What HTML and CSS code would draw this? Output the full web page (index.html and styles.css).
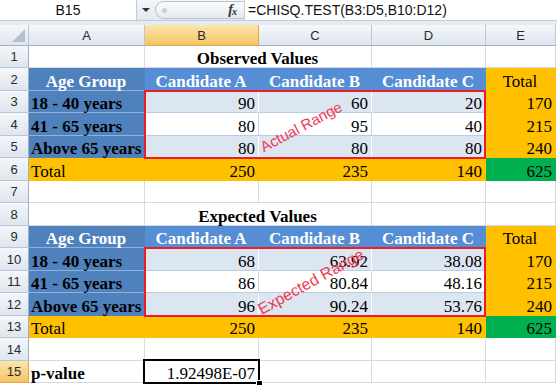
FILE: index.html
```html
<!DOCTYPE html>
<html>
<head>
	<meta charset="utf-8" />
	<title>CHISQ.TEST</title>
	<link rel="stylesheet" href="styles.css">
</head>
<body>
<div class="fbar">
	<div class="namebox">B15</div>
	<div class="drop"></div>
	<div class="fxzone">
		<span class="pill"><span class="dot"></span></span>
		<i class="fx">f<sub>x</sub></i>
	</div>
	<div class="formula">=CHISQ.TEST(B3:D5,B10:D12)</div>
</div>
<div class="gap"></div>
<div class="sheetwrap">
	<div class="sheet">
		<!-- column headers -->
		<div class="corner"><span class="tri"></span></div>
		<div class="hd">A</div>
		<div class="hd sel">B</div>
		<div class="hd">C</div>
		<div class="hd">D</div>
		<div class="hd">E</div>

		<!-- observed -->
		<div class="rh">1</div>
		<div class="c"></div>
		<div class="c span2 b ctr">Observed Values</div>
		<div class="c"></div>
		<div class="c"></div>

		<div class="rh">2</div>
		<div class="c bl b ctr wt">Age Group</div>
		<div class="c bl2 b ctr wt">Candidate A</div>
		<div class="c bl2 b ctr wt">Candidate B</div>
		<div class="c bl2 b ctr wt">Candidate C</div>
		<div class="c or ctr">Total</div>

		<div class="rh">3</div>
		<div class="c bl b">18 - 40 years</div>
		<div class="c sh num">90</div>
		<div class="c sh num">60</div>
		<div class="c sh num">20</div>
		<div class="c or num">170</div>

		<div class="rh">4</div>
		<div class="c bl b">41 - 65 years</div>
		<div class="c wh num">80</div>
		<div class="c wh num">95</div>
		<div class="c wh num">40</div>
		<div class="c or num">215</div>

		<div class="rh">5</div>
		<div class="c bl b last">Above 65 years</div>
		<div class="c sh num">80</div>
		<div class="c sh num">80</div>
		<div class="c sh num">80</div>
		<div class="c or num">240</div>

		<div class="rh">6</div>
		<div class="c or">Total</div>
		<div class="c or num">250</div>
		<div class="c or num">235</div>
		<div class="c or num">140</div>
		<div class="c gr num">625</div>

		<div class="rh">7</div>
		<div class="c"></div>
		<div class="c"></div>
		<div class="c"></div>
		<div class="c"></div>
		<div class="c"></div>

		<!-- expected -->
		<div class="rh">8</div>
		<div class="c"></div>
		<div class="c span2 b ctr">Expected Values</div>
		<div class="c"></div>
		<div class="c"></div>

		<div class="rh">9</div>
		<div class="c bl b ctr wt">Age Group</div>
		<div class="c bl2 b ctr wt">Candidate A</div>
		<div class="c bl2 b ctr wt">Candidate B</div>
		<div class="c bl2 b ctr wt">Candidate C</div>
		<div class="c or ctr">Total</div>

		<div class="rh">10</div>
		<div class="c bl b">18 - 40 years</div>
		<div class="c sh num">68</div>
		<div class="c sh num">63.92</div>
		<div class="c sh num">38.08</div>
		<div class="c or num">170</div>

		<div class="rh">11</div>
		<div class="c bl b">41 - 65 years</div>
		<div class="c wh num">86</div>
		<div class="c wh num">80.84</div>
		<div class="c wh num">48.16</div>
		<div class="c or num">215</div>

		<div class="rh">12</div>
		<div class="c bl b last">Above 65 years</div>
		<div class="c sh num">96</div>
		<div class="c sh num">90.24</div>
		<div class="c sh num">53.76</div>
		<div class="c or num">240</div>

		<div class="rh">13</div>
		<div class="c or">Total</div>
		<div class="c or num">250</div>
		<div class="c or num">235</div>
		<div class="c or num">140</div>
		<div class="c gr num">625</div>

		<div class="rh">14</div>
		<div class="c"></div>
		<div class="c"></div>
		<div class="c"></div>
		<div class="c"></div>
		<div class="c"></div>

		<div class="rh sel">15</div>
		<div class="c b">p-value</div>
		<div class="c num">1.92498E-07</div>
		<div class="c"></div>
		<div class="c"></div>
		<div class="c"></div>
	</div>

	<!-- marks drawn over the cells -->
	<div class="marks">
		<div class="range actual"><span class="tag">Actual Range</span></div>
		<div class="range expected"><span class="tag">Expected Range</span></div>
		<div class="cursor"><span class="handle"></span></div>
	</div>
</div>
</body>
</html>
```

FILE: styles.css
```css
body{
	margin: 0;
	padding: 0;
	width: 557px;
	height: 385px;
	overflow: hidden;
	background-color: #fff;
	font-family: "Liberation Serif", "Times New Roman", serif;
	font-size: 17px;
	color: #000;
}
/* barre de formule */
.fbar{
	display: flex;
	height: 20px;
	background: linear-gradient(#f3f6fa, #e3e9f1);
	border-bottom: 1px solid #c5ccd6;
	font-family: "Liberation Sans", Arial, sans-serif;
	font-size: 14px;
}
.namebox{
	width: 136px;
	background-color: #fff;
	border-right: 1px solid #c5ccd6;
	text-align: center;
	line-height: 20px;
	color: #111;
}
.drop{
	width: 18px;
	display: flex;
	align-items: center;
	justify-content: center;
}
.drop::before{
	content: "";
	border-left: 4px solid transparent;
	border-right: 4px solid transparent;
	border-top: 4px solid #333;
}
.fxzone{
	display: flex;
	align-items: center;
	width: 87px;
	padding-right: 2px;
}
.pill{
	flex: 1;
	height: 16px;
	border: 1px solid #b9c2ce;
	border-right: none;
	border-radius: 9px 0 0 9px;
	background: linear-gradient(#fbfcfd, #e4e9f0);
	display: flex;
	align-items: center;
}
.dot{
	width: 5px;
	height: 5px;
	margin-left: 6px;
	border-radius: 50%;
	background-color: #c9cfd7;
}
.fx{
	font-family: "Liberation Serif", serif;
	font-weight: bold;
	font-size: 14px;
	color: #333;
	margin-left: -22px;
	margin-right: 6px;
	letter-spacing: -1px;
}
.fx sub{
	font-size: 10px;
	vertical-align: -1px;
}
.formula{
	flex: 1;
	background-color: #fff;
	border-left: 1px solid #c5ccd6;
	padding-left: 3px;
	line-height: 20px;
	color: #111;
}
.gap{
	height: 4px;
	background-color: #e6ebf2;
}
/* feuille */
.sheetwrap{
	position: relative;
}
.sheet, .marks{
	display: grid;
	grid-template-columns: 29px 116px 114px 113px 114px 70px;
	grid-template-rows: 21px 22px 23px 22px 23px 22px 23px 22px 23px 22px 23px 22px 23px 22px 23px 22px;
}
.marks{
	position: absolute;
	top: 0;
	left: 0;
	right: 0;
	bottom: 0;
	pointer-events: none;
}
.sheet > div{
	box-sizing: border-box;
	border-right: 1px solid #d4dbe6;
	border-bottom: 1px solid #d4dbe6;
	display: flex;
	align-items: flex-end;
	white-space: nowrap;
	overflow: visible;
}
.corner, .hd, .rh{
	background: linear-gradient(#f4f7fb, #dfe5ee);
	font-family: "Liberation Sans", Arial, sans-serif;
	font-size: 13px;
	color: #2a2a2a;
	justify-content: center;
	align-items: center !important;
}
.sheet .corner, .sheet .hd{
	border-right-color: #bcc6d3;
	border-bottom-color: #9fb0c5;
}
.sheet .rh{
	border-right-color: #9fb0c5;
	border-bottom-color: #bcc6d3;
}
.corner{
	position: relative;
}
.tri{
	position: absolute;
	right: 3px;
	bottom: 3px;
	border-left: 13px solid transparent;
	border-bottom: 13px solid #b7c0cc;
}
.sheet .sel{
	background: linear-gradient(#fbe6ab, #f4c465);
	border-right-color: #e2a743;
	border-bottom-color: #e2a743;
}
.c{
	padding: 0 3px 0 2px;
	line-height: 17px;
}
.span2{
	grid-column: span 2;
}
.b{
	font-weight: bold;
}
.ctr{
	justify-content: center;
}
.num{
	justify-content: flex-end;
}
.wt{
	color: #fff;
}
/* couleurs */
.sheet .bl{
	background-color: #4f81bd;
	border-right-color: #4f81bd;
	border-bottom-color: #94b0d8;
}
.sheet .bl.last{
	border-bottom-color: #4f81bd;
}
.sheet .bl2{
	background-color: #558ed5;
	border-color: #558ed5;
}
.sheet .sh{
	background-color: #dce6f1;
	border-right-color: #fff;
	border-bottom-color: #b8cce4;
}
.sheet .wh{
	background-color: #fff;
	border-right-color: #c5d5ea;
	border-bottom-color: #b8cce4;
}
.sheet .or{
	background-color: #ffc000;
	border-color: #ffc000;
}
.sheet .gr{
	background-color: #00b050;
	border-color: #00b050;
}
/* plages et curseur */
.range{
	grid-column: 3 / 6;
	margin: -1px 0 -1px -1px;
	border: 2px solid #ee1c25;
	display: flex;
	align-items: center;
	justify-content: center;
}
.actual{
	grid-row: 4 / 7;
}
.expected{
	grid-row: 11 / 14;
}
.tag{
	font-family: "Liberation Sans", Arial, sans-serif;
	font-size: 15px;
	color: #ef3a52;
	white-space: nowrap;
}
.actual .tag{
	transform: translate(-14px, 2px) rotate(-28deg);
}
.expected .tag{
	font-size: 16px;
	transform: translate(-4px, 0) rotate(-29deg);
}
.cursor{
	grid-column: 3 / 4;
	grid-row: 16 / 17;
	margin: -2px -1px -1px -2px;
	border: 2px solid #000;
	position: relative;
}
.handle{
	position: absolute;
	right: -5px;
	bottom: -5px;
	width: 5px;
	height: 5px;
	background-color: #000;
	border: 1px solid #fff;
}
```
